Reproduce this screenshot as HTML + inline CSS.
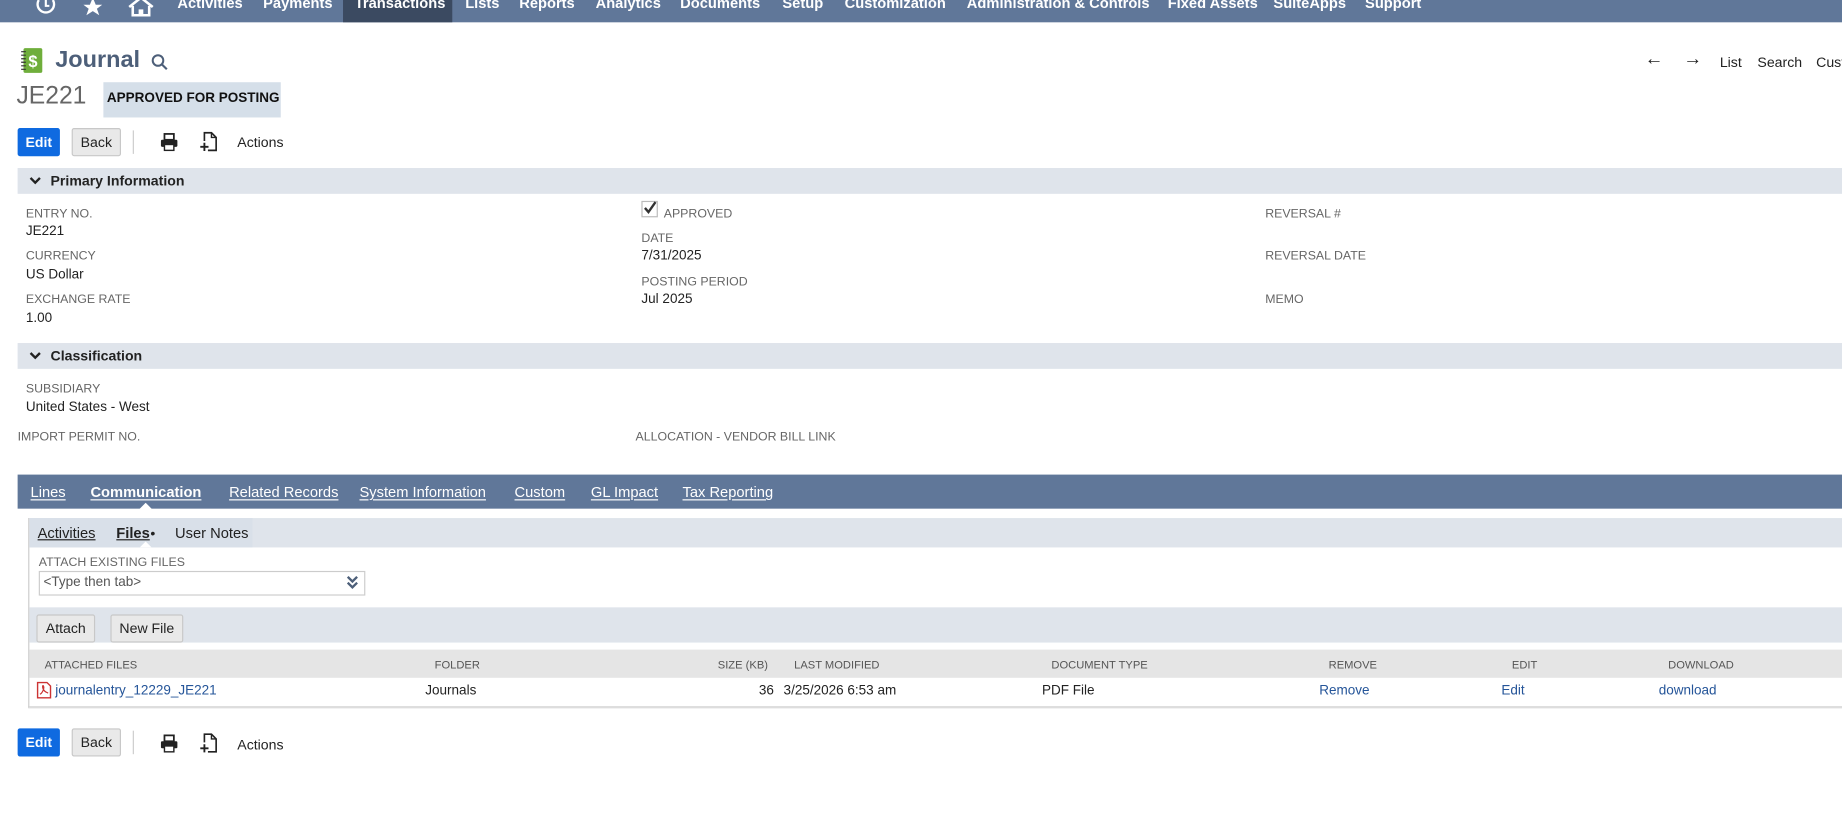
<!DOCTYPE html>
<html><head><meta charset="utf-8">
<style>
html,body{margin:0;padding:0;width:1842px;height:832px;overflow:hidden;background:#fff}
#w{position:absolute;left:0;top:0;width:1568px;height:708px;transform:scale(1.17474);transform-origin:0 0;font-family:"Liberation Sans",sans-serif;color:#222}
.a{position:absolute;white-space:nowrap}
.nav{position:absolute;left:0;top:0;width:1568px;height:19px;background:#607799}
.nv{position:absolute;top:-4px;color:#fff;font-weight:bold;font-size:12.5px}
.band{position:absolute;left:15px;width:1553px;height:22px;background:#dfe4eb}
.bt{position:absolute;font-size:12px;font-weight:bold;color:#222;top:4px;left:28px}
.lbl{position:absolute;font-size:10.5px;color:#666;white-space:nowrap}
.val{position:absolute;font-size:11.5px;color:#222;white-space:nowrap;margin-top:1px}
.tab{position:absolute;top:412px;color:#fff;font-size:12.5px;text-decoration:underline;text-underline-offset:2px}
.btn{position:absolute;height:22px;border:1px solid #c8c8c8;border-radius:2px;background:#e9e9e9;font-size:12px;line-height:22px;text-align:center;color:#222;font-weight:bold}
.blue{background:#0f6ae0;border-color:#0f6ae0;color:#fff}
.th{position:absolute;top:561px;font-size:9.5px;color:#555;white-space:nowrap}
.td{position:absolute;top:582px;font-size:11.5px;color:#222;white-space:nowrap}
.lk{color:#255599}
</style></head><body><div id="w">
<div class="nav"></div>
<div style="position:absolute;left:292px;top:0;width:93px;height:19px;background:#3b4a61"></div>
<svg class="a" style="left:30px;top:0" width="110" height="14" viewBox="0 0 110 14">
<path d="M3 0 A7 7 0 1 0 15 0" fill="none" stroke="#fff" stroke-width="2"/><path d="M9 0v5h3" fill="none" stroke="#fff" stroke-width="1.8"/>
<path d="M49 -2 L51.5 4 L57 4 L52.5 7.5 L54.5 13 L49 9.5 L43.5 13 L45.5 7.5 L41 4 L46.5 4Z" fill="#fff"/>
<path d="M80 6 L90 -2 L100 6 M83 5 V13 H97 V5" fill="none" stroke="#fff" stroke-width="2.2"/><rect x="88" y="8" width="4" height="5" fill="#fff"/>
</svg>
<span class="nv" style="left:151px">Activities</span>
<span class="nv" style="left:224px">Payments</span>
<span class="nv" style="left:302px">Transactions</span>
<span class="nv" style="left:396px">Lists</span>
<span class="nv" style="left:442px">Reports</span>
<span class="nv" style="left:507px">Analytics</span>
<span class="nv" style="left:579px">Documents</span>
<span class="nv" style="left:666px">Setup</span>
<span class="nv" style="left:719px">Customization</span>
<span class="nv" style="left:823px">Administration &amp; Controls</span>
<span class="nv" style="left:994px">Fixed Assets</span>
<span class="nv" style="left:1084px">SuiteApps</span>
<span class="nv" style="left:1162px">Support</span>

<svg class="a" style="left:17px;top:40px" width="20" height="24" viewBox="0 0 20 24"><rect x="3" y="1" width="16" height="21" rx="1.5" fill="#6fae3b"/><path d="M1 4h4M1 7h4M1 10h4M1 13h4M1 16h4M1 19h4" stroke="#333" stroke-width="1"/><text x="11" y="17" font-family="Liberation Sans" font-size="14" font-weight="bold" fill="#fff" text-anchor="middle">$</text></svg>
<span class="a" style="left:47px;top:40px;font-size:20px;font-weight:bold;color:#4d5f79">Journal</span>
<svg class="a" style="left:128px;top:45px" width="16" height="16" viewBox="0 0 16 16"><circle cx="6.5" cy="6.5" r="4.5" fill="none" stroke="#4d5f79" stroke-width="1.7"/><path d="M10 10l4 4" stroke="#4d5f79" stroke-width="1.8"/></svg>
<span class="a" style="left:1400px;top:42px;font-size:16px;color:#222">&#8592;</span>
<span class="a" style="left:1433px;top:42px;font-size:16px;color:#222">&#8594;</span>
<span class="a" style="left:1464px;top:46px;font-size:12px">List</span>
<span class="a" style="left:1496px;top:46px;font-size:12px">Search</span>
<span class="a" style="left:1546px;top:46px;font-size:12px">Customize</span>

<span class="a" style="left:14px;top:70px;font-size:21px;color:#666">JE221</span>
<div class="a" style="left:88px;top:70px;width:151px;height:30px;background:#d5dfe9"></div>
<span class="a" style="left:91px;top:78px;font-size:11.5px;font-weight:bold;color:#111">APPROVED FOR POSTING</span>

<div class="btn blue" style="left:15px;top:109px;width:34px">Edit</div>
<div class="btn" style="left:61px;top:109px;width:40px;font-weight:normal">Back</div>
<div class="a" style="left:113px;top:111px;width:1px;height:20px;background:#ccc"></div>
<svg class="a" style="left:136px;top:113px" width="16" height="16" viewBox="0 0 16 16"><rect x="4" y="1" width="8" height="5" fill="none" stroke="#222" stroke-width="1.5"/><rect x="1" y="6" width="14" height="6" rx="1" fill="#222"/><rect x="4" y="10" width="8" height="5" fill="#fff" stroke="#222" stroke-width="1.2"/></svg>
<svg class="a" style="left:170px;top:112px" width="16" height="18" viewBox="0 0 16 18"><path d="M4 8V1h6l4 4v11H7" fill="none" stroke="#222" stroke-width="1.4"/><path d="M10 1v4h4" fill="none" stroke="#222" stroke-width="1.2"/><path d="M0.5 13h7M4 9.5v7" stroke="#222" stroke-width="1.6"/></svg>
<span class="a" style="left:202px;top:114px;font-size:12px">Actions</span>

<div class="band" style="top:143px"><svg class="a" style="left:10px;top:7px" width="10" height="8" viewBox="0 0 10 8"><path d="M1 1.5l4 4 4-4" fill="none" stroke="#222" stroke-width="2"/></svg><span class="bt">Primary Information</span></div>
<span class="lbl" style="left:22px;top:176px">ENTRY NO.</span><span class="val" style="left:22px;top:190px">JE221</span>
<span class="lbl" style="left:22px;top:212px">CURRENCY</span><span class="val" style="left:22px;top:227px">US Dollar</span>
<span class="lbl" style="left:22px;top:249px">EXCHANGE RATE</span><span class="val" style="left:22px;top:264px">1.00</span>
<div class="a" style="left:546px;top:171px;width:12px;height:12px;border:1px solid #bbb;background:#fff"></div>
<svg class="a" style="left:547px;top:171px" width="13" height="12" viewBox="0 0 13 12"><path d="M2 6l3 3.5L11 1" fill="none" stroke="#333" stroke-width="2"/></svg>
<span class="lbl" style="left:565px;top:176px">APPROVED</span>
<span class="lbl" style="left:546px;top:197px">DATE</span><span class="val" style="left:546px;top:211px">7/31/2025</span>
<span class="lbl" style="left:546px;top:234px">POSTING PERIOD</span><span class="val" style="left:546px;top:248px">Jul 2025</span>
<span class="lbl" style="left:1077px;top:176px">REVERSAL #</span>
<span class="lbl" style="left:1077px;top:212px">REVERSAL DATE</span>
<span class="lbl" style="left:1077px;top:249px">MEMO</span>

<div class="band" style="top:292px"><svg class="a" style="left:10px;top:7px" width="10" height="8" viewBox="0 0 10 8"><path d="M1 1.5l4 4 4-4" fill="none" stroke="#222" stroke-width="2"/></svg><span class="bt">Classification</span></div>
<span class="lbl" style="left:22px;top:325px">SUBSIDIARY</span><span class="val" style="left:22px;top:340px">United States - West</span>
<span class="lbl" style="left:15px;top:366px">IMPORT PERMIT NO.</span>
<span class="lbl" style="left:541px;top:366px">ALLOCATION - VENDOR BILL LINK</span>

<div class="a" style="left:15px;top:404px;width:1553px;height:29px;background:#607799"></div>
<span class="tab" style="left:26px">Lines</span>
<span class="tab" style="left:77px;font-weight:bold">Communication</span>
<span class="tab" style="left:195px">Related Records</span>
<span class="tab" style="left:306px">System Information</span>
<span class="tab" style="left:438px">Custom</span>
<span class="tab" style="left:503px">GL Impact</span>
<span class="tab" style="left:581px">Tax Reporting</span>
<svg class="a" style="left:118px;top:428px" width="12" height="6"><path d="M0 6L6 0L12 6Z" fill="#fff"/></svg>

<div class="a" style="left:24px;top:441px;width:1544px;height:162px;border-left:1px solid #ccc;border-bottom:2px solid #ddd;box-sizing:border-box"></div>
<div class="a" style="left:25px;top:441px;width:1543px;height:25px;background:#dfe4eb"></div>
<div class="a" style="left:25px;top:441px;width:190px;height:25px;background:#d9e0e9"></div>
<span class="a" style="left:32px;top:447px;font-size:12.5px;text-decoration:underline">Activities</span>
<span class="a" style="left:99px;top:447px;font-size:12.5px;font-weight:bold;text-decoration:underline">Files</span><span class="a" style="left:128px;top:447px;font-size:12px">&#8226;</span>
<span class="a" style="left:149px;top:447px;font-size:12.5px">User Notes</span>
<svg class="a" style="left:119px;top:461px" width="10" height="5"><path d="M0 5L5 0L10 5Z" fill="#fff"/></svg>

<span class="lbl" style="left:33px;top:473px">ATTACH EXISTING FILES</span>
<div class="a" style="left:33px;top:486px;width:278px;height:21px;border:1px solid #ccc;box-sizing:border-box"></div>
<span class="a" style="left:37px;top:490px;font-size:11.5px;color:#555">&lt;Type then tab&gt;</span>
<svg class="a" style="left:295px;top:490px" width="10" height="12" viewBox="0 0 10 12"><path d="M1 1l4 4 4-4M1 6l4 4 4-4" fill="none" stroke="#4d5f79" stroke-width="2"/></svg>

<div class="a" style="left:25px;top:517px;width:1543px;height:30px;background:#dfe4eb"></div>
<div class="btn" style="left:31px;top:523px;width:48px;font-weight:normal">Attach</div>
<div class="btn" style="left:94px;top:523px;width:60px;font-weight:normal">New File</div>
<div class="a" style="left:25px;top:553px;width:1543px;height:24px;background:#e5e5e5"></div>
<span class="th" style="left:38px">ATTACHED FILES</span>
<span class="th" style="left:370px">FOLDER</span>
<span class="th" style="left:611px">SIZE (KB)</span>
<span class="th" style="left:676px">LAST MODIFIED</span>
<span class="th" style="left:895px">DOCUMENT TYPE</span>
<span class="th" style="left:1131px">REMOVE</span>
<span class="th" style="left:1287px">EDIT</span>
<span class="th" style="left:1420px">DOWNLOAD</span>
<svg class="a" style="left:31px;top:580px" width="13" height="15" viewBox="0 0 13 15"><path d="M1 1h8l3 3v10H1Z" fill="#fff" stroke="#c33" stroke-width="1.2"/><path d="M3 11c2-1 4-5 3-7s-2 4 4 6" fill="none" stroke="#c33" stroke-width="1"/></svg>
<span class="td lk" style="left:47px">journalentry_12229_JE221</span>
<span class="td" style="left:362px">Journals</span>
<span class="td" style="left:646px">36</span>
<span class="td" style="left:667px">3/25/2026 6:53 am</span>
<span class="td" style="left:887px">PDF File</span>
<span class="td lk" style="left:1123px">Remove</span>
<span class="td lk" style="left:1278px">Edit</span>
<span class="td lk" style="left:1412px">download</span>

<div class="btn blue" style="left:15px;top:620px;width:34px">Edit</div>
<div class="btn" style="left:61px;top:620px;width:40px;font-weight:normal">Back</div>
<div class="a" style="left:113px;top:622px;width:1px;height:20px;background:#ccc"></div>
<svg class="a" style="left:136px;top:625px" width="16" height="16" viewBox="0 0 16 16"><rect x="4" y="1" width="8" height="5" fill="none" stroke="#222" stroke-width="1.5"/><rect x="1" y="6" width="14" height="6" rx="1" fill="#222"/><rect x="4" y="10" width="8" height="5" fill="#fff" stroke="#222" stroke-width="1.2"/></svg>
<svg class="a" style="left:170px;top:624px" width="16" height="18" viewBox="0 0 16 18"><path d="M4 8V1h6l4 4v11H7" fill="none" stroke="#222" stroke-width="1.4"/><path d="M10 1v4h4" fill="none" stroke="#222" stroke-width="1.2"/><path d="M0.5 13h7M4 9.5v7" stroke="#222" stroke-width="1.6"/></svg>
<span class="a" style="left:202px;top:627px;font-size:12px">Actions</span>
</div></body></html>
